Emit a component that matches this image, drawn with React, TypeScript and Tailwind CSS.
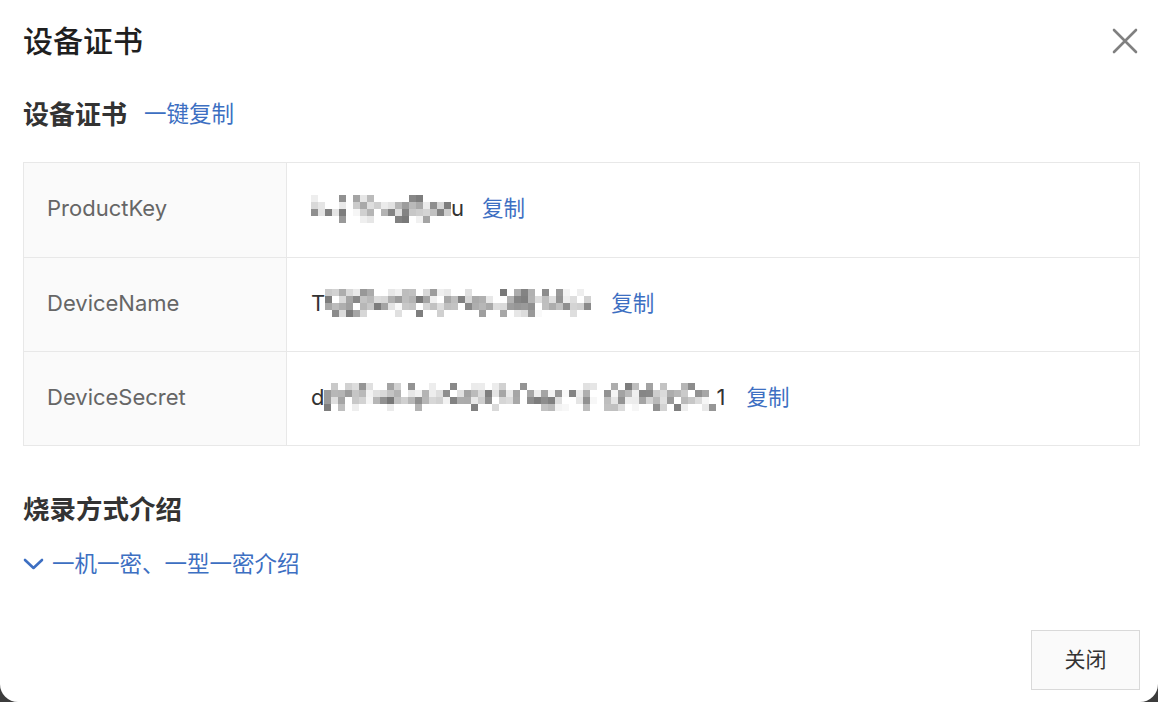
import React from "react";

const cjk = "font-['Inter','Noto_Sans_CJK_SC',sans-serif]";

// deterministic mosaic for masked values
function Mosaic({ cols, seed }: { cols: number; seed: number }) {
    const cell = 7;
    const rows = 4;
    const rects: React.ReactNode[] = [];
    let s = seed;
    const rnd = () => {
        s = (s * 9301 + 49297) % 233280;
        return s / 233280;
    };
    for (let r = 0; r < rows; r++) {
        for (let c = 0; c < cols; c++) {
            const v = rnd();
            const edge = r === 0 || r === rows - 1;
            if ((edge && v < 0.6) || v < 0.12) continue;
            const shade = Math.round(120 + rnd() * 130);
            rects.push(
                <rect
                    key={`${r}-${c}`}
                    x={c * cell}
                    y={r * cell}
                    width={cell}
                    height={cell}
                    fill={`rgb(${shade},${shade},${shade})`}
                />,
            );
        }
    }
    return (
        <svg width={cols * cell} height={rows * cell} className="block">
            {rects}
        </svg>
    );
}

function CopyLink() {
    return <span className="text-[21.5px] text-[#3d6fc2] cursor-pointer">复制</span>;
}

const rows = [
    { label: "ProductKey", pre: "", cols: 20, post: "u", seed: 11, gap: "ml-[18px]" },
    { label: "DeviceName", pre: "T", cols: 38, post: "", seed: 37, gap: "ml-[20px]" },
    { label: "DeviceSecret", pre: "d", cols: 56, post: "1", seed: 73, gap: "ml-[21px]" },
];

export default function App() {
    return (
        <div className={`h-[702px] w-[1158px] overflow-hidden bg-[#3c3c3c] ${cjk}`}>
            <div className="flex h-full flex-col rounded-b-[18px] bg-white pl-[23px] pr-[18px] pb-[12px]">
                <div className="flex h-[82px] items-center justify-between">
                    <h1 className="text-[30px] font-medium text-[#1f1f1f]">设备证书</h1>
                    <button className="mr-[2px] text-[#808080]">
                        <svg width="26" height="26" viewBox="0 0 26 26" fill="none" stroke="currentColor" strokeWidth="2.6" strokeLinecap="round">
                            <path d="M2 2L24 24M24 2L2 24" />
                        </svg>
                    </button>
                </div>

                <div className="mt-[17px] flex h-[30px] items-center gap-[17px]">
                    <h2 className="text-[26px] font-semibold text-[#333]">设备证书</h2>
                    <span className="text-[22.5px] text-[#3d6fc2]">一键复制</span>
                </div>

                <div className="mt-[33px] border border-[#e8e8e8]">
                    {rows.map((row, i) => (
                        <div
                            key={row.label}
                            className={`flex h-[94px] ${i > 0 ? "border-t border-[#e8e8e8]" : "h-[93px]"}`}
                        >
                            <div className="flex w-[263px] shrink-0 items-center border-r border-[#e8e8e8] bg-[#fafafa] pb-[3px] pl-[23px] text-[22px] text-[#666]">
                                {row.label}
                            </div>
                            <div className="flex items-center pb-[3px] pl-[24px] text-[22px] text-[#333]">
                                {row.pre && <span>{row.pre}</span>}
                                <Mosaic cols={row.cols} seed={row.seed} />
                                {row.post && <span>{row.post}</span>}
                                <span className={row.gap}>
                                    <CopyLink />
                                </span>
                            </div>
                        </div>
                    ))}
                </div>

                <div className="mt-[49px] flex h-[30px] items-center">
                    <h2 className="text-[26.5px] font-semibold text-[#333]">烧录方式介绍</h2>
                </div>

                <div className="mt-[25px] flex h-[28px] items-center gap-[8px] text-[#3d6fc2]">
                    <svg width="21" height="14" viewBox="0 0 21 14" fill="none" stroke="currentColor" strokeWidth="2.6" strokeLinecap="round" strokeLinejoin="round">
                        <path d="M2 3L10.5 11L19 3" />
                    </svg>
                    <span className="text-[22.5px]">一机一密、一型一密介绍</span>
                </div>

                <div className="mt-auto flex justify-end">
                    <button className="h-[60px] w-[109px] border border-[#d9d9d9] bg-[#fafafa] text-[21px] text-[#333]">
                        关闭
                    </button>
                </div>
            </div>
        </div>
    );
}
